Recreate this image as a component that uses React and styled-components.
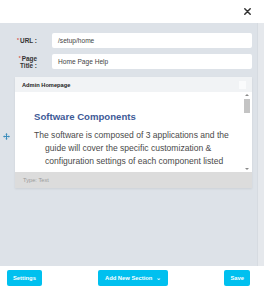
import React from "react";
import styled, { createGlobalStyle } from "styled-components";

const GlobalStyle = createGlobalStyle`
  html, body {
    margin: 0;
    padding: 0;
    background: #ffffff;
    font-family: "Liberation Sans", Arial, sans-serif;
  }
`;

const StyledModal = styled.div`
  width: 264px;
  height: 300px;
  display: flex;
  flex-direction: column;
  background: #ffffff;
  overflow: hidden;
`;

const StyledHeader = styled.header`
  height: 23px;
  flex: none;
  display: flex;
  justify-content: flex-end;
  align-items: center;
  padding-right: 13px;
`;

const StyledClose = styled.button`
  border: none;
  background: none;
  padding: 0;
  width: 7px;
  height: 7px;
  display: flex;
  cursor: pointer;
`;

const StyledBody = styled.div`
  flex: 1;
  display: flex;
  background: #dde2e8;
`;

const StyledContent = styled.div`
  flex: 1;
  padding: 10px 5px 0 15px;
  display: flex;
  flex-direction: column;
`;

const StyledTrack = styled.div`
  width: 7px;
  flex: none;
  background: #e5e8ec;
  border-left: 1px solid #d6dbe1;
`;

const StyledRow = styled.div`
  display: flex;
  align-items: center;
  gap: 15px;
  margin-bottom: 6px;
`;

const StyledLabel = styled.label`
  width: 22px;
  flex: none;
  text-align: right;
  font-size: 6.4px;
  line-height: 7px;
  font-weight: 700;
  color: #333333;
`;

const StyledStar = styled.span`
  color: #d9534f;
  font-size: 5px;
  vertical-align: top;
  margin-right: 1px;
`;

const StyledInput = styled.div`
  flex: 1;
  height: 15px;
  background: #ffffff;
  border-radius: 2px;
  display: flex;
  align-items: center;
  padding-left: 6px;
  font-size: 6.6px;
  color: #444444;
`;

const StyledPanelRow = styled.div`
  position: relative;
  margin-top: 2px;
`;

const StyledMove = styled.span`
  position: absolute;
  left: -12px;
  top: 56px;
  display: flex;
`;

const StyledPanel = styled.section`
  width: 237px;
  display: flex;
  flex-direction: column;
  box-shadow: 0 1px 2px rgba(0, 0, 0, 0.08);
`;

const StyledPanelHead = styled.div`
  height: 15px;
  background: #f1f3f5;
  display: flex;
  align-items: center;
  justify-content: space-between;
  padding: 0 6px 0 7px;
  font-size: 5.7px;
  font-weight: 700;
  color: #222222;
`;

const StyledHeadBox = styled.span`
  width: 7px;
  height: 8px;
  background: #fafbfc;
`;

const StyledEditor = styled.div`
  height: 80px;
  background: #ffffff;
  display: flex;
  overflow: hidden;
`;

const StyledText = styled.div`
  flex: 1;
  padding: 19px 10px 0 19px;
  overflow: hidden;
`;

const StyledTitle = styled.h2`
  margin: 0 0 7px 0;
  font-size: 9.6px;
  line-height: 11px;
  font-weight: 700;
  color: #3e5a97;
`;

const StyledPara = styled.p`
  margin: 0;
  font-size: 8.55px;
  line-height: 13px;
  color: #4a4a4a;
  padding-left: 11px;
  text-indent: -11px;
`;

const StyledScroll = styled.div`
  width: 8px;
  flex: none;
  display: flex;
  flex-direction: column;
  align-items: center;
  padding: 2px 0;
  margin-right: 1px;
`;

const StyledArrow = styled.span`
  width: 0;
  height: 0;
  border-left: 2px solid transparent;
  border-right: 2px solid transparent;
  ${(p) =>
    p.up
      ? "border-bottom: 2px solid #8a8a8a;"
      : "border-top: 2px solid #8a8a8a;"}
`;

const StyledThumb = styled.span`
  width: 6px;
  height: 14px;
  margin-top: 3px;
  background: #c4c4c4;
  flex: none;
`;

const StyledSpacer = styled.span`
  flex: 1;
`;

const StyledPanelFoot = styled.div`
  height: 16px;
  background: #dcdcdc;
  display: flex;
  align-items: center;
  padding-left: 8px;
  font-size: 5.7px;
  color: #9a9a9a;
`;

const StyledFooter = styled.footer`
  height: 30px;
  flex: none;
  display: flex;
  justify-content: space-between;
  align-items: flex-start;
  padding: 4px 14px 0 7px;
`;

const StyledButton = styled.button`
  height: 16px;
  border: none;
  border-radius: 2px;
  background: #00c0ef;
  color: #ffffff;
  font-family: inherit;
  font-size: 5.8px;
  font-weight: 700;
  padding: 0 ${(p) => p.pad || 6}px;
  display: flex;
  align-items: center;
  gap: 4px;
  cursor: pointer;
`;

const CloseIcon = () => (
  <svg width="7" height="7" viewBox="0 0 7 7">
    <path
      d="M0.8 0.8 L6.2 6.2 M6.2 0.8 L0.8 6.2"
      stroke="#333"
      strokeWidth="1.5"
      strokeLinecap="round"
    />
  </svg>
);

const MoveIcon = () => (
  <svg width="7" height="7" viewBox="0 0 14 14" fill="#3c8dbc">
    <path d="M7 0 L9.5 3 H8 V6 H11 V4.5 L14 7 L11 9.5 V8 H8 V11 H9.5 L7 14 L4.5 11 H6 V8 H3 V9.5 L0 7 L3 4.5 V6 H6 V3 H4.5 Z" />
  </svg>
);

const App = () => (
  <>
    <GlobalStyle />
    <StyledModal>
      <StyledHeader>
        <StyledClose aria-label="Close">
          <CloseIcon />
        </StyledClose>
      </StyledHeader>
      <StyledBody>
        <StyledContent>
          <StyledRow>
            <StyledLabel>
              <StyledStar>*</StyledStar>URL :
            </StyledLabel>
            <StyledInput>/setup/home</StyledInput>
          </StyledRow>
          <StyledRow>
            <StyledLabel>
              <StyledStar>*</StyledStar>Page Title :
            </StyledLabel>
            <StyledInput>Home Page Help</StyledInput>
          </StyledRow>
          <StyledPanelRow>
            <StyledMove>
              <MoveIcon />
            </StyledMove>
            <StyledPanel>
              <StyledPanelHead>
                Admin Homepage
                <StyledHeadBox />
              </StyledPanelHead>
              <StyledEditor>
                <StyledText>
                  <StyledTitle>Software Components</StyledTitle>
                  <StyledPara>
                    The software is composed of 3 applications and the guide
                    will cover the specific customization &amp; configuration
                    settings of each component listed
                  </StyledPara>
                </StyledText>
                <StyledScroll>
                  <StyledArrow up />
                  <StyledThumb />
                  <StyledSpacer />
                  <StyledArrow />
                </StyledScroll>
              </StyledEditor>
              <StyledPanelFoot>Type: Text</StyledPanelFoot>
            </StyledPanel>
          </StyledPanelRow>
        </StyledContent>
        <StyledTrack />
      </StyledBody>
      <StyledFooter>
        <StyledButton>Settings</StyledButton>
        <StyledButton pad={7}>
          Add New Section <span>⌄</span>
        </StyledButton>
        <StyledButton>Save</StyledButton>
      </StyledFooter>
    </StyledModal>
  </>
);

export default App;
